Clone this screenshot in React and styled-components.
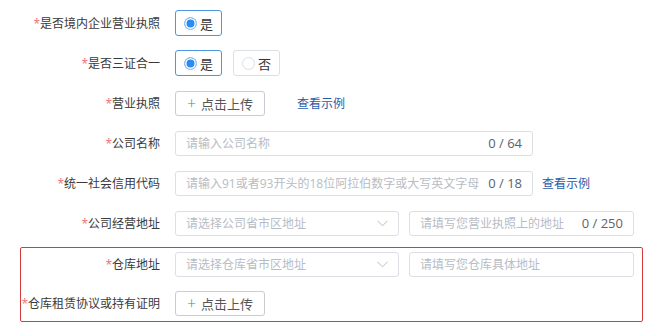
import styled, { createGlobalStyle } from "styled-components";

const GlobalStyle = createGlobalStyle`
  body {
    margin: 0;
    background: #fff;
    font-family: "Open Sans", "Noto Sans CJK SC", sans-serif;
    color: #333;
  }
`;

const Form = styled.div`
  width: 657px;
  padding-top: 10px;
`;

const Block = styled.div`
  display: flex;
  flex-direction: column;
  gap: 14px;
`;

const WarehouseBox = styled.div`
  display: flex;
  flex-direction: column;
  gap: 13px;
  margin: 11px 14px 0 20px;
  padding: 3px 0 5px;
  border: 1px solid #d23c3c;
  border-radius: 2px;
`;

const Row = styled.div`
  display: flex;
  align-items: center;
  height: 26px;
`;

const Label = styled.label`
  flex: none;
  width: ${(p) => p.$width}px;
  padding-right: 15px;
  box-sizing: border-box;
  text-align: right;
  font-size: 12px;
  white-space: nowrap;
  color: #3a3a3a;
`;

const Star = styled.span`
  color: #f56c6c;
`;

const Controls = styled.div`
  display: flex;
  align-items: center;
  gap: ${(p) => p.$gap || 10}px;
`;

const RadioButton = styled.div`
  display: flex;
  align-items: center;
  gap: 3px;
  box-sizing: border-box;
  width: 47px;
  height: 26px;
  padding-left: 8px;
  border: 1px solid ${(p) => (p.$checked ? "#4a98e0" : "#dcdfe6")};
  border-radius: 3px;
  font-size: 13px;
  color: #333;
`;

const RadioDot = styled.span`
  box-sizing: border-box;
  width: 13px;
  height: 13px;
  border-radius: 50%;
  border: 1px solid ${(p) => (p.$checked ? "#8fc1f0" : "#dcdfe6")};
  background: ${(p) => (p.$checked ? "#2d8cf0" : "#fff")};
  box-shadow: ${(p) => (p.$checked ? "inset 0 0 0 1.5px #fff" : "none")};
`;

const UploadButton = styled.div`
  display: flex;
  align-items: center;
  justify-content: center;
  gap: 5px;
  box-sizing: border-box;
  width: 90px;
  height: 25px;
  border: 1px solid #c9ccd2;
  border-radius: 3px;
  font-size: 13px;
  color: #555;
`;

const Plus = styled.span`
  font-size: 16px;
  font-weight: 300;
  color: #777;
  line-height: 1;
`;

const Link = styled.a`
  font-size: 12px;
  color: #2a5ca8;
  cursor: pointer;
  margin-left: ${(p) => p.$offset || 0}px;
`;

const Field = styled.div`
  display: flex;
  align-items: center;
  box-sizing: border-box;
  width: ${(p) => p.$width}px;
  height: 25px;
  padding: 0 10px;
  border: 1px solid #dcdfe6;
  border-radius: 3px;
  background: #fff;
`;

const TextInput = styled.input`
  flex: 1;
  min-width: 0;
  border: none;
  outline: none;
  padding: 0;
  font: inherit;
  font-size: 12px;
  color: #333;
  background: transparent;

  &::placeholder {
    color: #b8bcc4;
  }
`;

const Count = styled.span`
  flex: none;
  font-size: 13px;
  color: #606266;
  margin-left: 8px;
`;

const Chevron = () => (
  <svg width="11" height="7" viewBox="0 0 11 7" fill="none">
    <path d="M0.5 0.8 L5.5 5.8 L10.5 0.8" stroke="#b8bcc4" strokeWidth="1" />
  </svg>
);

function Input({ width, placeholder, count }) {
  return (
    <Field $width={width}>
      <TextInput readOnly placeholder={placeholder} />
      {count && <Count>{count}</Count>}
    </Field>
  );
}

function Select({ placeholder }) {
  return (
    <Field $width={224}>
      <TextInput readOnly placeholder={placeholder} />
      <Chevron />
    </Field>
  );
}

function Radio({ checked, children }) {
  return (
    <RadioButton $checked={checked}>
      <RadioDot $checked={checked} />
      {children}
    </RadioButton>
  );
}

function Upload() {
  return (
    <UploadButton>
      <Plus>+</Plus>
      点击上传
    </UploadButton>
  );
}

function FormRow({ label, width = 175, children }) {
  return (
    <Row>
      <Label $width={width}>
        <Star>*</Star>
        {label}
      </Label>
      {children}
    </Row>
  );
}

export default function App() {
  return (
    <>
      <GlobalStyle />
      <Form>
        <Block>
          <FormRow label="是否境内企业营业执照">
            <Radio checked>是</Radio>
          </FormRow>
          <FormRow label="是否三证合一">
            <Controls $gap={11}>
              <Radio checked>是</Radio>
              <Radio>否</Radio>
            </Controls>
          </FormRow>
          <FormRow label="营业执照">
            <Upload />
            <Link $offset={32}>查看示例</Link>
          </FormRow>
          <FormRow label="公司名称">
            <Input width={358} placeholder="请输入公司名称" count="0 / 64" />
          </FormRow>
          <FormRow label="统一社会信用代码">
            <Input
              width={358}
              placeholder="请输入91或者93开头的18位阿拉伯数字或大写英文字母"
              count="0 / 18"
            />
            <Link $offset={9}>查看示例</Link>
          </FormRow>
          <FormRow label="公司经营地址">
            <Controls>
              <Select placeholder="请选择公司省市区地址" />
              <Input width={225} placeholder="请填写您营业执照上的地址" count="0 / 250" />
            </Controls>
          </FormRow>
        </Block>
        <WarehouseBox>
          <FormRow label="仓库地址" width={154}>
            <Controls>
              <Select placeholder="请选择仓库省市区地址" />
              <Input width={225} placeholder="请填写您仓库具体地址" />
            </Controls>
          </FormRow>
          <FormRow label="仓库租赁协议或持有证明" width={154}>
            <Upload />
          </FormRow>
        </WarehouseBox>
      </Form>
    </>
  );
}
